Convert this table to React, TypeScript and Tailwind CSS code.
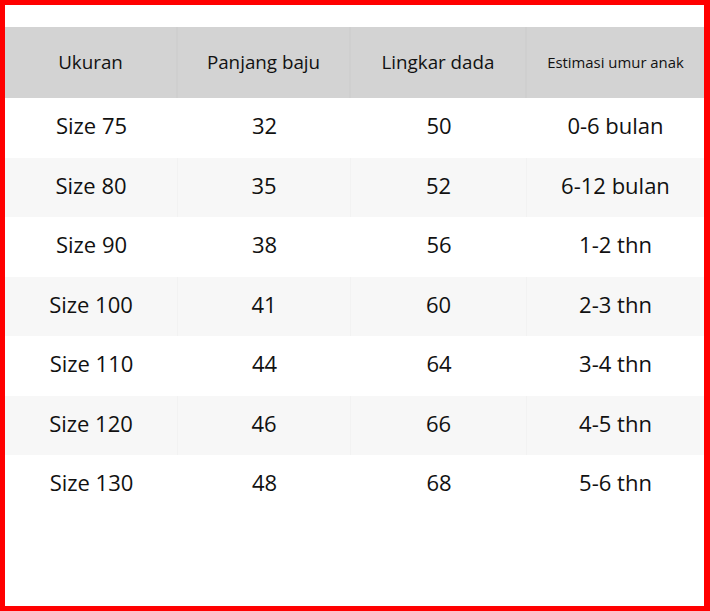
import React from 'react';

const rows = [
    ['Size 75', '32', '50', '0-6 bulan'],
    ['Size 80', '35', '52', '6-12 bulan'],
    ['Size 90', '38', '56', '1-2 thn'],
    ['Size 100', '41', '60', '2-3 thn'],
    ['Size 110', '44', '64', '3-4 thn'],
    ['Size 120', '46', '66', '4-5 thn'],
    ['Size 130', '48', '68', '5-6 thn'],
];

const App: React.FC = () => {
    return (
        <div
            className="w-[710px] h-[611px] bg-white border-solid border-[#ff0000] border-t-[5px] border-l-[5px] border-b-[5px] border-r-[6px] pt-[22px] text-[#111111]"
            style={{ fontFamily: '"Open Sans", "Noto Sans", sans-serif' }}
        >
            <div className="grid grid-cols-[173px_173px_176px_177px] h-[71px] bg-[#d3d3d3] items-center text-center text-[18.8px]">
                <div className="h-full flex items-center justify-center pb-[1px] border-r-2 border-[#cfcfcf]">Ukuran</div>
                <div className="h-full flex items-center justify-center pb-[1px] border-r-2 border-[#cfcfcf]">Panjang baju</div>
                <div className="h-full flex items-center justify-center pb-[1px] border-r-2 border-[#cfcfcf]">Lingkar dada</div>
                <div className="h-full flex items-center justify-center pb-[1px] text-[14.9px]">Estimasi umur anak</div>
            </div>
            {rows.map((row, i) => (
                <div
                    key={row[0]}
                    className={`grid grid-cols-[173px_173px_176px_177px] h-[59.5px] items-center text-center text-[22px] ${i % 2 === 1 ? 'bg-[#f7f7f7]' : 'bg-white'}`}
                >
                    {row.map((cell, j) => (
                        <div key={j} className={`h-full flex items-center justify-center pb-[4px] ${j < 3 && i % 2 === 1 ? 'border-r border-[#f2f2f2]' : ''}`}>
                            {cell}
                        </div>
                    ))}
                </div>
            ))}
        </div>
    );
};

export default App;
